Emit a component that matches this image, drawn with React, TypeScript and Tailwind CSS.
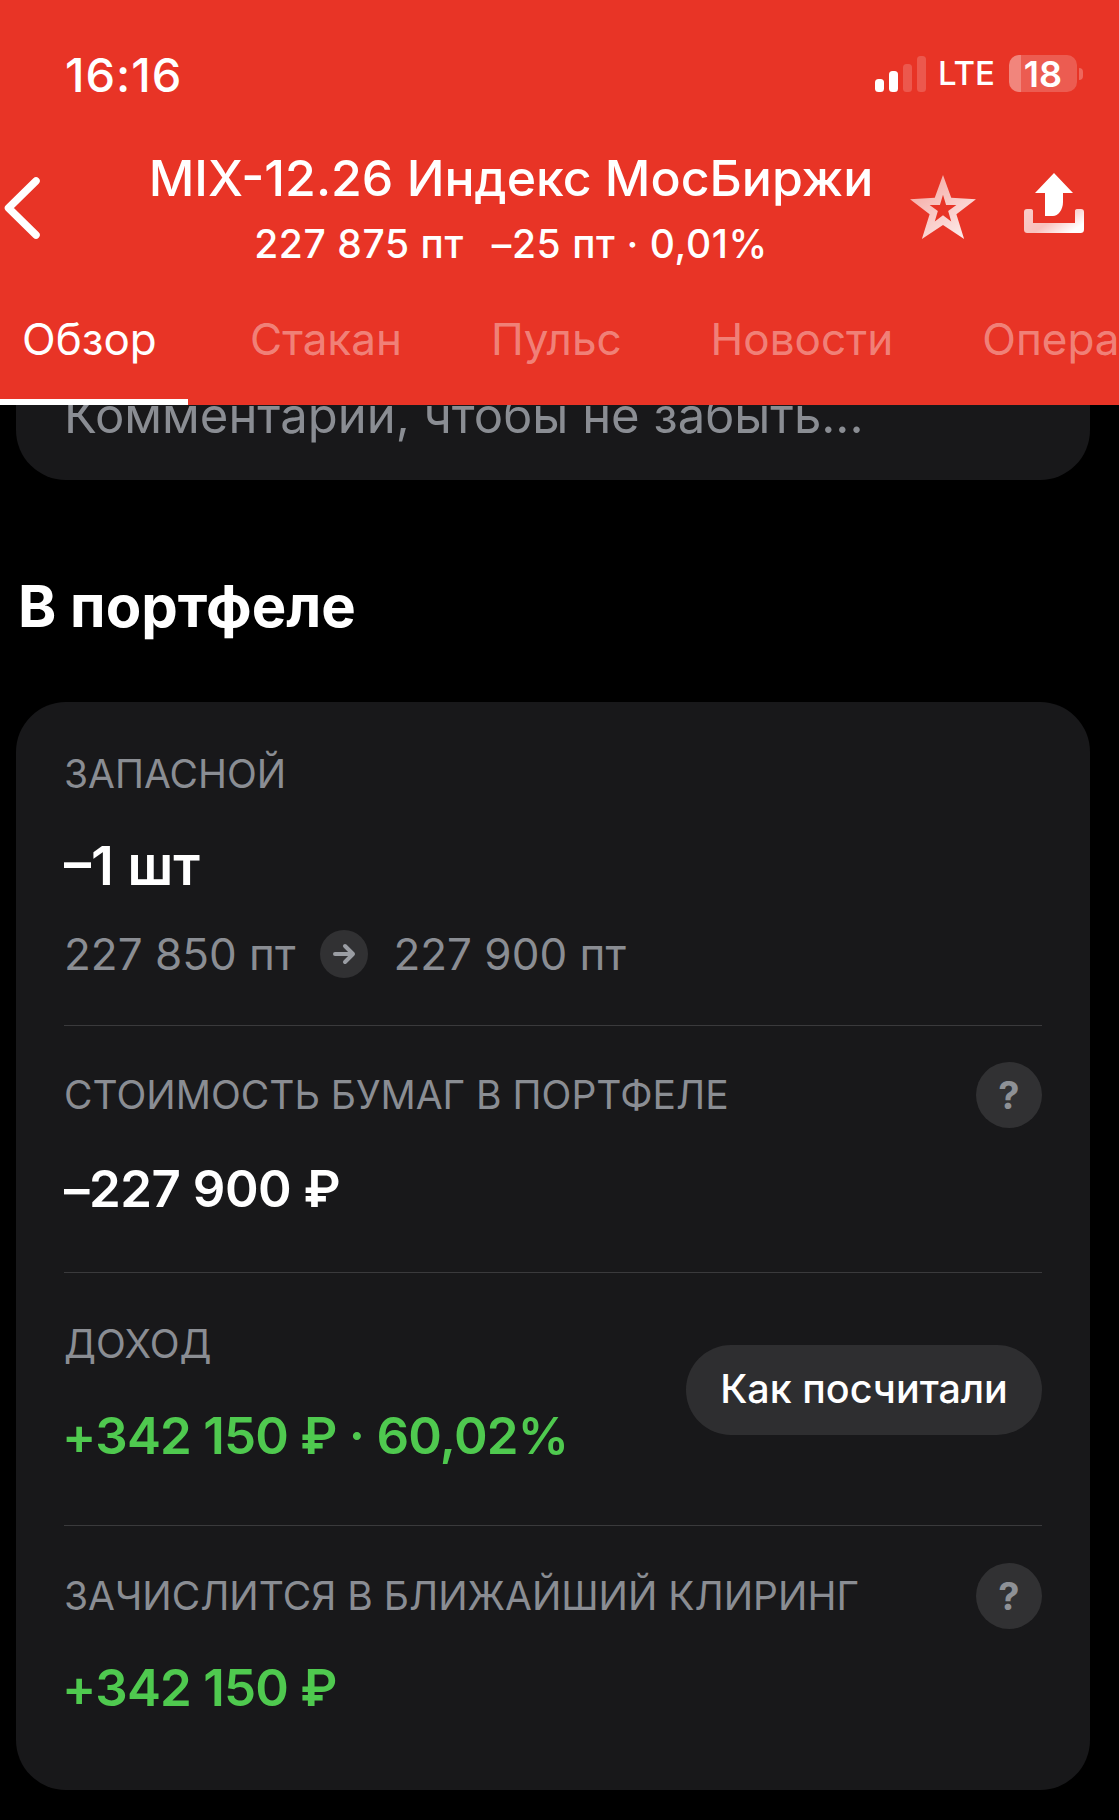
function BackIcon() {
  return (
    <svg width="36" height="62" viewBox="0 0 36 62" fill="none" stroke="#fff" strokeWidth="7.5" strokeLinecap="round" strokeLinejoin="round">
      <path d="M32 4 L4.5 31 L32 58" />
    </svg>
  );
}

function StarIcon() {
  return (
    <svg width="68" height="66" viewBox="0 0 66 64" fill="none">
      <defs>
        <linearGradient id="starFill" x1="0.1" y1="0" x2="0.9" y2="1">
          <stop offset="0" stopColor="#fff" stopOpacity="0.55" />
          <stop offset="1" stopColor="#fff" stopOpacity="0.92" />
        </linearGradient>
      </defs>
      <path
        fillRule="evenodd"
        fill="url(#starFill)"
        d="M33 1 L41 23 L65 24.5 L46 39 L53.5 63 L33 49.5 L12.5 63 L20 39 L1 24.5 L25 23 Z M33 20 L30 30 L20 30 L28 36 L25 46 L33 40 L41 46 L38 36 L46 30 L36 30 Z"
      />
    </svg>
  );
}

function ShareIcon() {
  return (
    <svg width="62" height="62" viewBox="0 0 62 62" fill="none">
      <defs>
        <linearGradient id="trayFill" x1="0" y1="0" x2="1" y2="0.6">
          <stop offset="0" stopColor="#fff" stopOpacity="0.75" />
          <stop offset="0.55" stopColor="#fff" stopOpacity="0.7" />
          <stop offset="1" stopColor="#fff" stopOpacity="1" />
        </linearGradient>
      </defs>
      <path fill="#fff" d="M31 1 L50 21 L40 21 L40 30 C40 38 35 44 30 44 L22 44 L22 21 L12 21 Z" />
      <path fill="url(#trayFill)" d="M1 40 C1 38 2 37 4 37 L8 37 C9.5 37 10 38 10 39 L10 51 L52 51 L52 39 C52 38 52.5 37 54 37 L58 37 C60 37 61 38 61 40 L61 57 C61 60 60 61 57 61 L5 61 C2 61 1 60 1 57 Z" />
    </svg>
  );
}

function SignalIcon() {
  return (
    <svg width="52" height="36" viewBox="0 0 52 36">
      <rect x="0" y="23" width="9" height="13" rx="3.5" fill="#fff" />
      <rect x="14" y="15" width="9" height="21" rx="3.5" fill="#fff" />
      <rect x="28" y="8" width="9" height="28" rx="3.5" fill="#fff" fillOpacity="0.18" />
      <rect x="42" y="0" width="9" height="36" rx="3.5" fill="#fff" fillOpacity="0.18" />
    </svg>
  );
}

function Battery() {
  return (
    <div className="flex items-center gap-[2px]">
      <div className="relative w-[68px] h-[37px] rounded-[10px] bg-white/20 flex items-center justify-center">
        <div className="absolute left-0 top-0 bottom-0 w-[12px] rounded-l-[10px] bg-white/25" />
        <span className="relative text-[36px] leading-[40px] font-semibold text-white">18</span>
      </div>
      <div className="w-[4px] h-[12px] rounded-r-full bg-white/25" />
    </div>
  );
}

function QuestionButton() {
  return (
    <div className="w-[66px] h-[66px] rounded-full bg-[#313133] flex items-center justify-center text-[38px] font-bold text-[#8e9196] shrink-0">
      ?
    </div>
  );
}

function Label({ children }: { children: React.ReactNode }) {
  return <div className="text-[39px] leading-[44px] text-[#8a8d93]">{children}</div>;
}

export default function App() {
  return (
    <div className="w-[1119px] h-[1820px] bg-black overflow-hidden font-['Inter',sans-serif] text-white">
      {/* Шапка */}
      <header className="relative z-10 h-[405px] bg-[#e83426] flex flex-col">
        <div className="h-[150px] pt-[55px] pl-[65px] pr-[36px] flex items-start justify-between">
          <span className="text-[47px] leading-[40px] font-medium tracking-[1px]">16:16</span>
          <div className="flex items-center">
            <SignalIcon />
            <span className="ml-[11px] mr-[14px] text-[33px] leading-[37px] font-medium">LTE</span>
            <Battery />
          </div>
        </div>

        <div className="h-[116px] flex items-start">
          <div className="w-[149px] pl-[4px] pt-[27px] shrink-0">
            <BackIcon />
          </div>
          <div className="w-[724px] shrink-0 flex flex-col items-center">
            <div className="text-[50px] leading-[56px] font-medium whitespace-nowrap">MIX-12.26 Индекс МосБиржи</div>
            <div className="flex gap-[28px] text-[39px] leading-[44px] font-medium tracking-[0.6px] whitespace-nowrap mt-[16px]">
              <span>227 875 пт</span>
              <span>–25 пт · 0,01%</span>
            </div>
          </div>
          <div className="ml-[36px] pt-[24px]">
            <StarIcon />
          </div>
          <div className="ml-[46px] pt-[22px]">
            <ShareIcon />
          </div>
        </div>

        <nav className="flex-1 flex items-stretch gap-[89px] overflow-hidden text-[44px] font-normal text-white/40 whitespace-nowrap">
          <div className="w-[188px] -mr-[27px] pl-[22px] pt-[40px] border-b-[6px] border-white text-white shrink-0">Обзор</div>
          <div className="pt-[40px] shrink-0">Стакан</div>
          <div className="pt-[40px] shrink-0">Пульс</div>
          <div className="pt-[40px] shrink-0">Новости</div>
          <div className="pt-[40px] shrink-0">Операции</div>
        </nav>
      </header>

      {/* Заметка, уезжает под шапку */}
      <div className="-mt-[60px] mx-[16px] w-[1074px] rounded-[50px] bg-[#18181a] pt-[44px] pb-[37px] px-[48px]">
        <div className="text-[49px] leading-[54px] text-[#8a8d93]">Комментарии, чтобы не забыть...</div>
      </div>

      <h2 className="mt-[91px] ml-[18px] text-[58px] leading-[70px] font-bold">В портфеле</h2>

      {/* Карточка позиции */}
      <section className="mt-[61px] mx-[16px] w-[1074px] h-[1088px] rounded-[50px] bg-[#18181a] px-[48px]">
        <div className="pt-[50px] h-[324px] border-b border-[#3a3a3c]">
          <Label>ЗАПАСНОЙ</Label>
          <div className="mt-[40px] text-[54px] leading-[60px] font-semibold">–1 шт</div>
          <div className="mt-[33px] flex items-center text-[44px] leading-[50px] text-[#8a8d93]">
            <span>227 850 пт</span>
            <div className="mx-[25px] w-[48px] h-[48px] rounded-full bg-[#313133] flex items-center justify-center">
              <svg width="24" height="22" viewBox="0 0 24 22" fill="none" stroke="#9a9da3" strokeWidth="4" strokeLinecap="round" strokeLinejoin="round">
                <path d="M3 11 H21 M13 3 L21 11 L13 19" />
              </svg>
            </div>
            <span>227 900 пт</span>
          </div>
        </div>

        <div className="h-[247px] pt-[36px] border-b border-[#3a3a3c]">
          <div className="flex items-center justify-between">
            <Label>СТОИМОСТЬ БУМАГ В ПОРТФЕЛЕ</Label>
            <QuestionButton />
          </div>
          <div className="mt-[31px] text-[51px] leading-[60px] font-semibold tracking-[-0.5px]">–227 900 ₽</div>
        </div>

        <div className="h-[253px] pt-[49px] flex items-start justify-between border-b border-[#3a3a3c]">
          <div>
            <Label>ДОХОД</Label>
            <div className="-ml-[2px] mt-[40px] text-[51px] leading-[60px] font-semibold tracking-[-0.75px] text-[#4fc94f]">+342 150 ₽ · 60,02%</div>
          </div>
          <button className="mt-[23px] w-[356px] h-[90px] rounded-full bg-[#2e2e30] text-[39.5px] font-medium text-white">Как посчитали</button>
        </div>

        <div className="pt-[37px]">
          <div className="flex items-center justify-between">
            <Label>ЗАЧИСЛИТСЯ В БЛИЖАЙШИЙ КЛИРИНГ</Label>
            <QuestionButton />
          </div>
          <div className="-ml-[2px] mt-[29px] text-[51px] leading-[60px] font-semibold tracking-[-0.75px] text-[#4fc94f]">+342 150 ₽</div>
        </div>
      </section>
    </div>
  );
}
